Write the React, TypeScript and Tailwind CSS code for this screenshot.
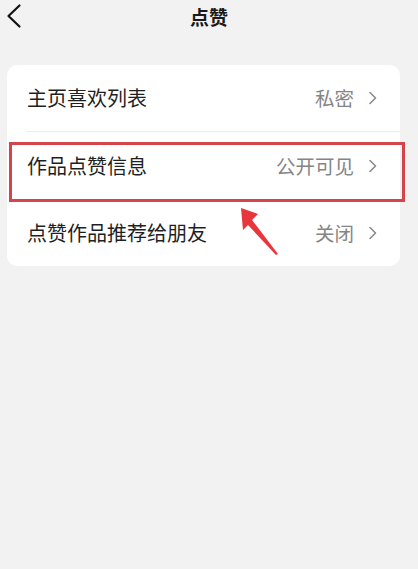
const rows = [
  { label: "主页喜欢列表", value: "私密" },
  { label: "作品点赞信息", value: "公开可见" },
  { label: "点赞作品推荐给朋友", value: "关闭" },
];

const SmallChevron = () => (
  <svg width="10" height="14" viewBox="0 0 10 14" fill="none" className="ml-[14px]">
    <path d="M2 1.5L7.5 7L2 12.5" stroke="#8a8a8a" strokeWidth="1.6" strokeLinecap="round" strokeLinejoin="round" />
  </svg>
);

const App = () => {
  return (
    <div
      className="relative h-[569px] w-[418px] overflow-hidden bg-[#f2f2f2]"
      style={{ fontFamily: '"Noto Sans CJK SC", "Noto Sans", sans-serif' }}
    >
      <div className="relative flex h-[33px] items-center justify-center">
        <svg className="absolute left-0 top-0" width="28" height="32" viewBox="0 0 28 32" fill="none">
          <path d="M19.5 5.5L8.5 16L19.5 26.5" stroke="#111" strokeWidth="2.2" strokeLinecap="round" strokeLinejoin="round" />
        </svg>
        <span className="text-[19px] font-bold leading-none text-[#1a1a1a]">点赞</span>
      </div>

      <div className="mx-[7px] mt-[32px] w-[393px] rounded-[10px] bg-white">
        {rows.map((row, i) => (
          <div key={row.label} className="flex h-[67px] items-center pl-[19px]">
            <div
              className={
                "flex h-full flex-1 items-center pr-[22px] " +
                (i === 0 ? "border-b border-[#ececec]" : "")
              }
            >
              <span className="flex-1 pl-[1px] text-[20px] leading-none text-[#1f1f1f]">{row.label}</span>
              <span className="text-[19.5px] leading-none text-[#858585]">{row.value}</span>
              <SmallChevron />
            </div>
          </div>
        ))}
      </div>

      {/* annotation box */}
      <div className="absolute left-[9px] top-[142px] h-[60px] w-[396px] border-[3px] border-[#d3454b]" />

      {/* annotation arrow */}
      <svg className="absolute left-[230px] top-[200px]" width="60" height="60" viewBox="0 0 60 60">
        <polygon points="11,8 28,14 22,20 48,54 46,55 18,25 13,30" fill="#e8363c" />
      </svg>
    </div>
  );
};

export default App;
